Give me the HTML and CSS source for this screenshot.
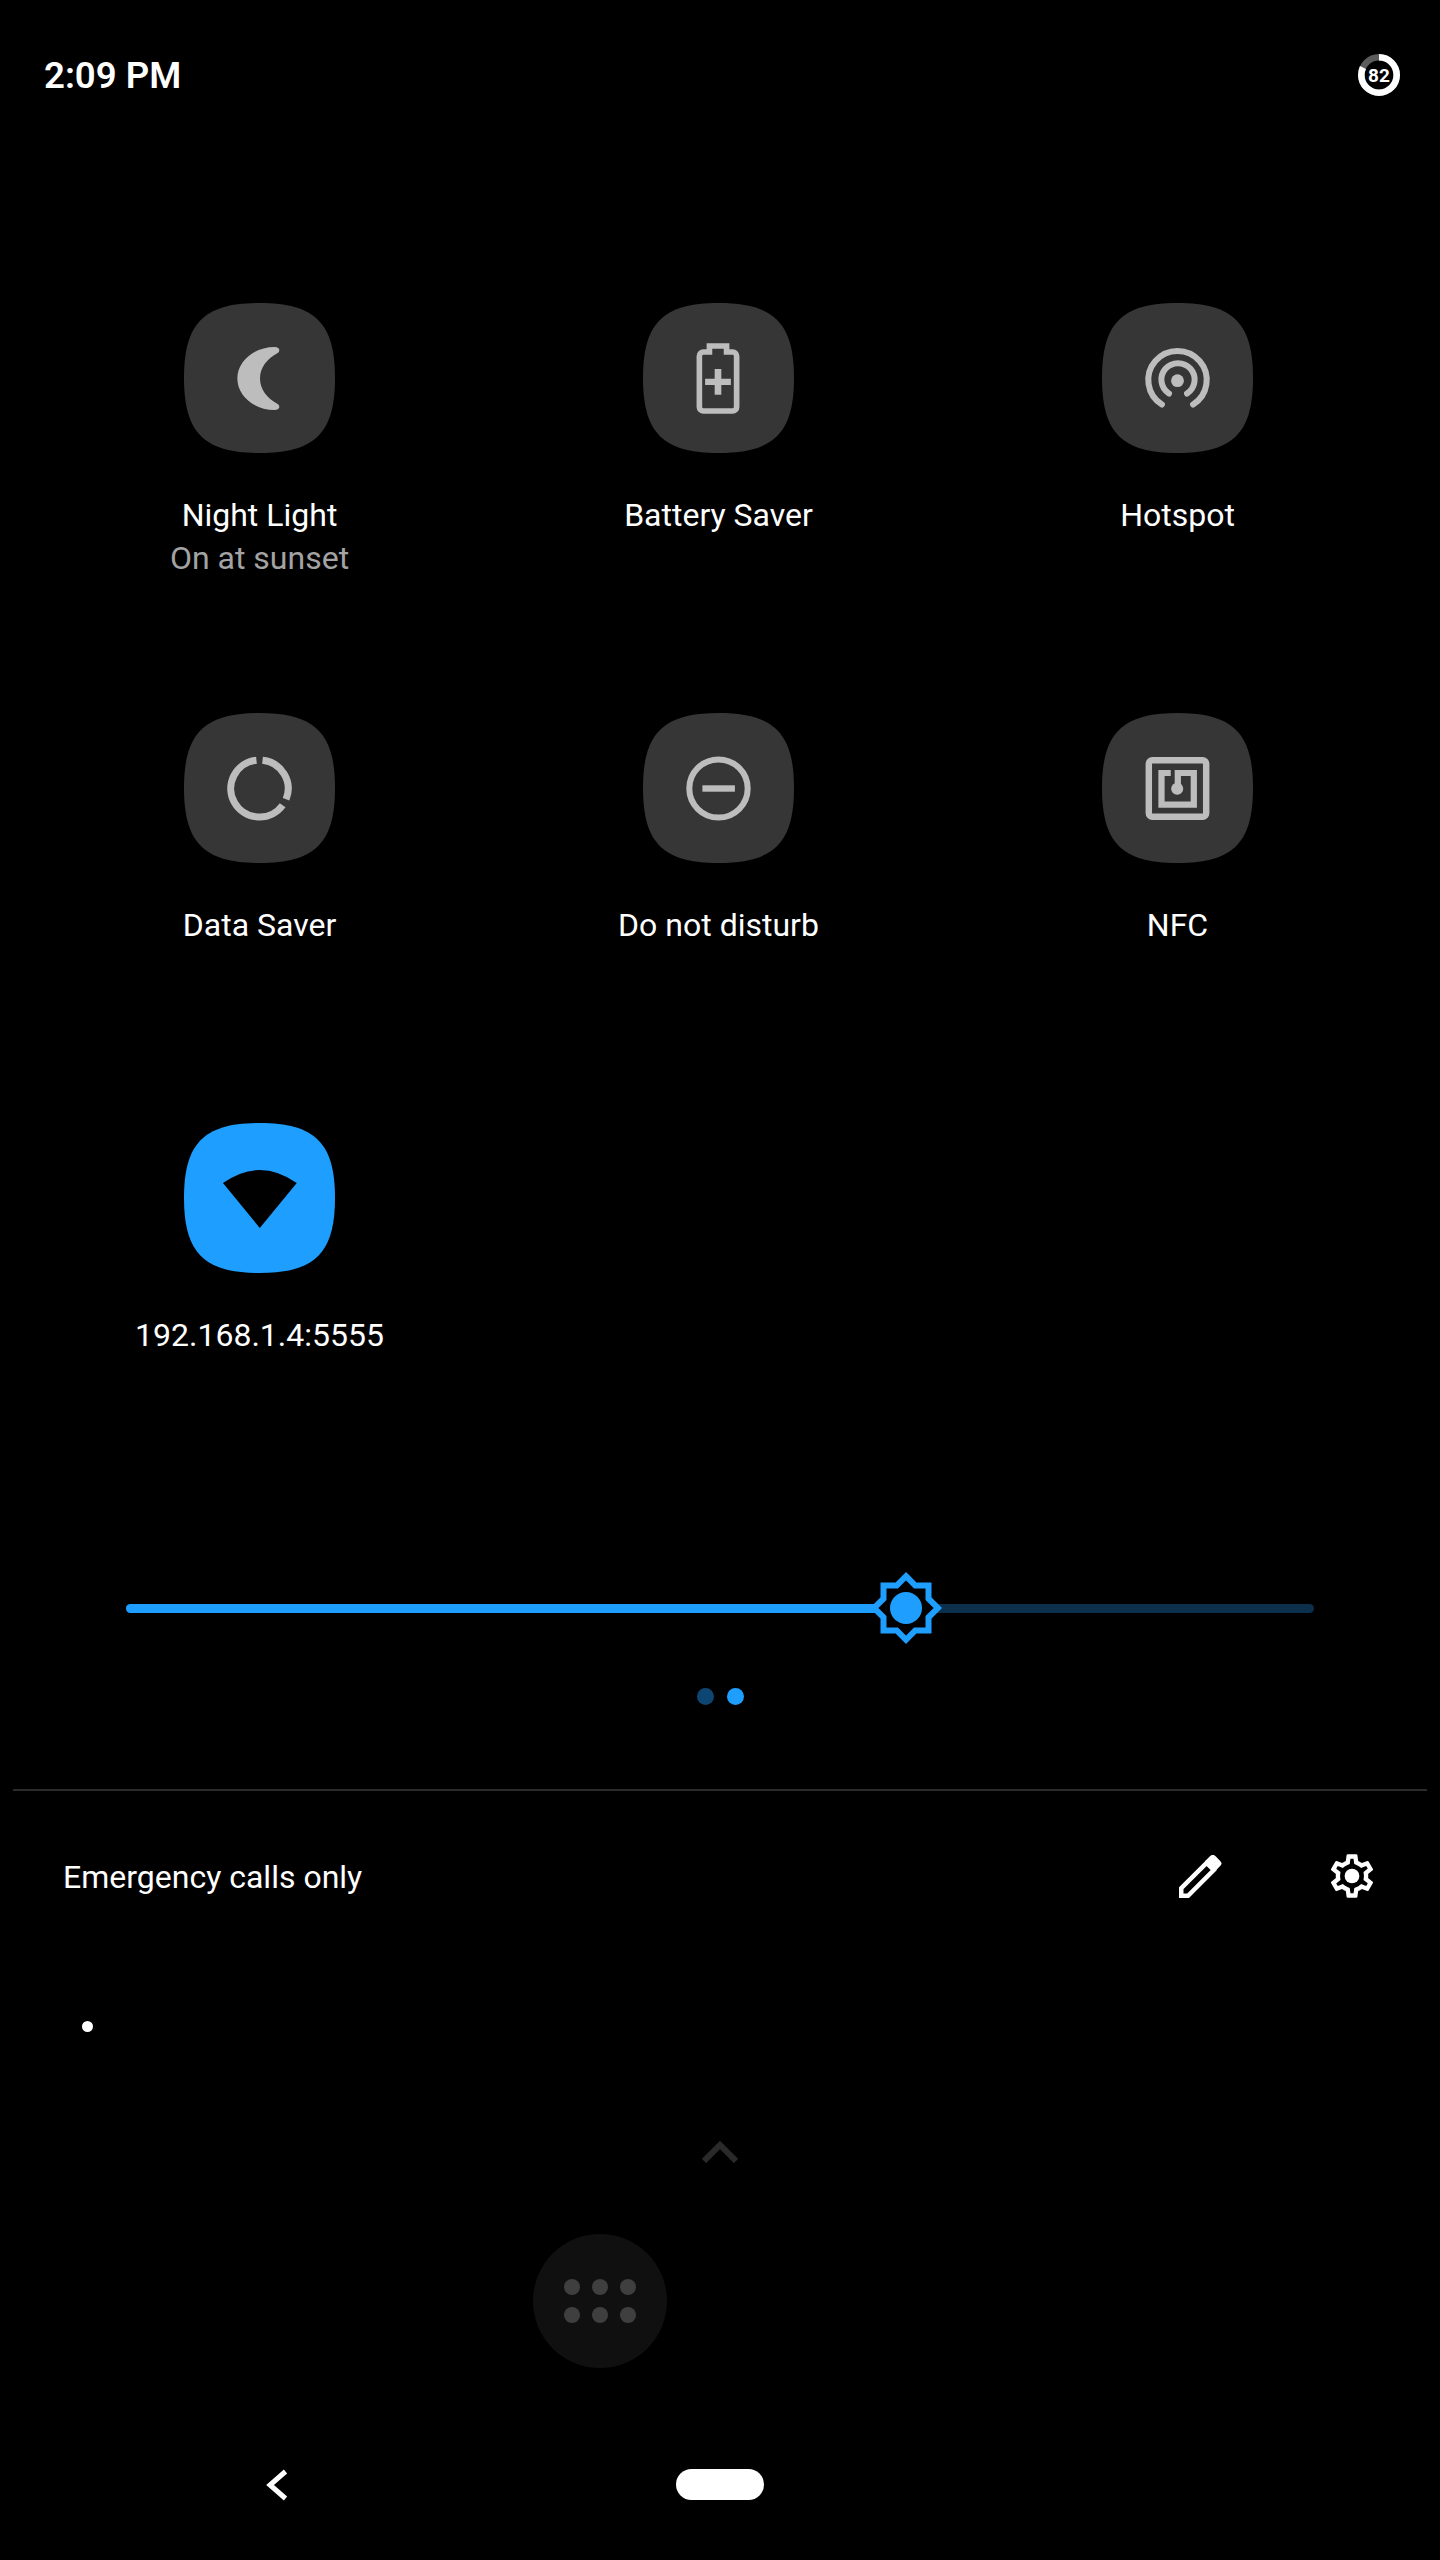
FILE: index.html
```html
<!DOCTYPE html>
<html lang="en">
<head>
<meta charset="utf-8">
<title>Quick settings</title>
<link rel="stylesheet" href="styles.css">
</head>
<body>
<div class="screen">
  <header class="status">
    <span class="time">2:09 PM</span>
    <div class="battery">
      <svg class="battery-ring" viewBox="0 0 42 42" width="42" height="42">
        <circle class="ring-bg" cx="21" cy="21" r="17.7"/>
        <circle class="ring-fg" cx="21" cy="21" r="17.7" pathLength="100" transform="rotate(-90 21 21)"/>
      </svg>
      <span class="battery-level">82</span>
    </div>
  </header>

  <section class="tiles">
    <div class="tile">
      <svg class="tile-icon" viewBox="0 0 150 150" width="151" height="150" preserveAspectRatio="none">
        <path class="shape" d="M75 0C130 0 150 20 150 75S130 150 75 150S0 130 0 75S20 0 75 0Z"/>
        <path class="glyph" d="M90 44C70 44 53 58 53 75.5S70 107 90 107C95 107 96 103 93 101C82 95 75.5 86 75.5 75.5S82 56 93 50C96 48 95 44 90 44Z"/>
      </svg>
      <div class="tile-label">Night Light</div>
      <div class="tile-sub">On at sunset</div>
    </div>
    <div class="tile">
      <svg class="tile-icon" viewBox="0 0 150 150" width="151" height="150" preserveAspectRatio="none">
        <path class="shape" d="M75 0C130 0 150 20 150 75S130 150 75 150S0 130 0 75S20 0 75 0Z"/>
        <path class="line" stroke-width="5.6" d="M66 49V43H83V49H89A4 4 0 0 1 93 53V104A4 4 0 0 1 89 108H60A4 4 0 0 1 56 104V53A4 4 0 0 1 60 49Z"/>
        <path class="glyph" d="M71.2 66H77.8V75.7H87.3V82H77.8V91.7H71.2V82H61.7V75.7H71.2Z"/>
      </svg>
      <div class="tile-label">Battery Saver</div>
    </div>
    <div class="tile">
      <svg class="tile-icon" viewBox="0 0 150 150" width="151" height="150" preserveAspectRatio="none">
        <path class="shape" d="M75 0C130 0 150 20 150 75S130 150 75 150S0 130 0 75S20 0 75 0Z"/>
        <circle class="glyph" cx="75" cy="77.7" r="6.4"/>
        <path class="line round" stroke-width="6" d="M59.5 101.5A29 29 0 1 1 90.5 101.5"/>
        <path class="line round" stroke-width="6" d="M66.5 90.5A16.5 16.5 0 1 1 84.5 90.5"/>
      </svg>
      <div class="tile-label">Hotspot</div>
    </div>
    <div class="tile">
      <svg class="tile-icon" viewBox="0 0 150 150" width="151" height="150" preserveAspectRatio="none">
        <path class="shape" d="M75 0C130 0 150 20 150 75S130 150 75 150S0 130 0 75S20 0 75 0Z"/>
        <path class="line" stroke-width="7" d="M78 47.2A28.5 28.5 0 0 1 101.4 86.2"/>
        <path class="line" stroke-width="7" d="M98 92.3A28.5 28.5 0 1 1 72 47.2"/>
      </svg>
      <div class="tile-label">Data Saver</div>
    </div>
    <div class="tile">
      <svg class="tile-icon" viewBox="0 0 150 150" width="151" height="150" preserveAspectRatio="none">
        <path class="shape" d="M75 0C130 0 150 20 150 75S130 150 75 150S0 130 0 75S20 0 75 0Z"/>
        <circle class="line" stroke-width="6" cx="75" cy="75.5" r="29"/>
        <rect class="glyph" x="59" y="72.3" width="32.3" height="6.4"/>
      </svg>
      <div class="tile-label">Do not disturb</div>
    </div>
    <div class="tile">
      <svg class="tile-icon" viewBox="0 0 150 150" width="151" height="150" preserveAspectRatio="none">
        <path class="shape" d="M75 0C130 0 150 20 150 75S130 150 75 150S0 130 0 75S20 0 75 0Z"/>
        <rect class="line" stroke-width="6.4" x="46.5" y="47.2" width="57" height="56.6" rx="3.5"/>
        <path class="line" stroke-width="6.2" d="M68.3 60H59.1V91.6H91.2V60H75.3V72"/>
        <circle class="glyph" cx="74.7" cy="75.7" r="6"/>
      </svg>
      <div class="tile-label">NFC</div>
    </div>
    <div class="tile">
      <svg class="tile-icon" viewBox="0 0 150 150" width="151" height="150" preserveAspectRatio="none">
        <path class="shape active" d="M75 0C130 0 150 20 150 75S130 150 75 150S0 130 0 75S20 0 75 0Z"/>
        <path class="cutout" d="M38.7 60Q75.3 34 112 60L75.3 105Z"/>
      </svg>
      <div class="tile-label">192.168.1.4:5555</div>
    </div>
  </section>

  <section class="brightness">
    <div class="track">
      <div class="track-fill"></div>
    </div>
    <svg class="thumb" viewBox="-37 -37 74 74" width="74" height="74">
      <polygon class="thumb-star" points="0,-31.8 9.3,-22.5 22.5,-22.5 22.5,-9.3 31.8,0 22.5,9.3 22.5,22.5 9.3,22.5 0,31.8 -9.3,22.5 -22.5,22.5 -22.5,9.3 -31.8,0 -22.5,-9.3 -22.5,-22.5 -9.3,-22.5"/>
      <circle class="thumb-sun" r="16"/>
    </svg>
  </section>

  <div class="pager">
    <span class="pager-dot dim"></span>
    <span class="pager-dot"></span>
  </div>

  <div class="divider"></div>

  <footer class="footer">
    <span class="carrier">Emergency calls only</span>
    <div class="footer-actions">
      <svg class="pencil" viewBox="0 0 44 43" width="44" height="43">
        <path class="pencil-body" d="M2.25 33.25V40.75H9.05L34.75 15L27.6 7.9Z"/>
        <path class="pencil-cap" d="M26 6.3L31.2 1.1A3.7 3.7 0 0 1 36.4 1.1L41.2 5.9A3.7 3.7 0 0 1 41.2 11.1L36 16.3Z"/>
      </svg>
      <svg class="gear" viewBox="0 0 24 24" width="52" height="52">
        <path class="gear-shape" d="M19.43 12.98c.04-.32.07-.64.07-.98 0-.34-.03-.66-.07-.98l2.11-1.65c.19-.15.24-.42.12-.64l-2-3.46c-.09-.16-.26-.25-.44-.25-.06 0-.12.01-.17.03l-2.49 1c-.52-.4-1.08-.73-1.69-.98l-.38-2.65C14.46 2.18 14.25 2 14 2h-4c-.25 0-.46.18-.49.42l-.38 2.65c-.61.25-1.17.59-1.69.98l-2.49-1c-.06-.02-.12-.03-.18-.03-.17 0-.34.09-.43.25l-2 3.46c-.13.22-.07.49.12.64l2.11 1.65c-.04.32-.07.65-.07.98 0 .33.03.66.07.98l-2.11 1.65c-.19.15-.24.42-.12.64l2 3.46c.09.16.26.25.44.25.06 0 .12-.01.17-.03l2.49-1c.52.4 1.08.73 1.69.98l.38 2.65c.03.24.24.42.49.42h4c.25 0 .46-.18.49-.42l.38-2.65c.61-.25 1.17-.59 1.69-.98l2.49 1c.06.02.12.03.18.03.17 0 .34-.09.43-.25l2-3.46c.12-.22.07-.49-.12-.64l-2.11-1.65zm-1.98-1.71c.04.31.05.52.05.73 0 .21-.02.43-.05.73l-.14 1.13.89.7 1.08.84-.7 1.21-1.27-.51-1.04-.42-.9.68c-.43.32-.84.56-1.25.73l-1.06.43-.16 1.13-.2 1.35h-1.4l-.19-1.35-.16-1.13-1.06-.43c-.43-.18-.83-.41-1.23-.71l-.91-.7-1.06.43-1.27.51-.7-1.21 1.08-.84.89-.7-.14-1.13c-.03-.31-.05-.54-.05-.74s.02-.43.05-.73l.14-1.13-.89-.7-1.08-.84.7-1.21 1.27.51 1.04.42.9-.68c.43-.32.84-.56 1.25-.73l1.06-.43.16-1.13.2-1.35h1.39l.19 1.35.16 1.13 1.06.43c.43.18.83.41 1.23.71l.91.7 1.06-.43 1.27-.51.7 1.21-1.07.85-.89.7.14 1.13z"/>
        <circle class="gear-shape" cx="12" cy="12" r="3.4"/>
      </svg>
    </div>
  </footer>

  <div class="notif-dot"></div>

  <svg class="chevron" viewBox="0 0 36 22" width="36" height="22">
    <path class="chevron-line" d="M2 20L18 4L34 20"/>
  </svg>

  <div class="drawer">
    <span class="drawer-dot"></span><span class="drawer-dot"></span><span class="drawer-dot"></span>
    <span class="drawer-dot"></span><span class="drawer-dot"></span><span class="drawer-dot"></span>
  </div>

  <nav class="nav">
    <svg class="back" viewBox="0 0 24 32" width="24" height="32">
      <path class="back-line" d="M21.5 2.5L6 16L21.5 29.5"/>
    </svg>
    <div class="home"></div>
  </nav>
</div>
</body>
</html>
```

FILE: styles.css
```css
* { box-sizing: border-box; }

html, body {
  margin: 0;
  background: #000;
}

.screen {
  width: 1440px;
  height: 2560px;
  overflow: hidden;
  background: #000;
  color: #fff;
  font-family: Roboto, "Noto Sans", sans-serif;
}

.status {
  height: 150px;
  padding: 0 40px 0 44px;
  display: flex;
  align-items: center;
  justify-content: space-between;
}

.time {
  margin-top: 3px;
  font-size: 36.6px;
  font-weight: 600;
  line-height: 1;
}

.battery {
  position: relative;
  width: 42px;
  height: 42px;
}

.battery-ring { display: block; }

.ring-bg, .ring-fg {
  fill: none;
  stroke-width: 6.6;
}

.ring-bg { stroke: #5c5c5c; }

.ring-fg {
  stroke: #fff;
  stroke-dasharray: 82 18;
}

.battery-level {
  position: absolute;
  inset: 0;
  display: flex;
  align-items: center;
  justify-content: center;
  font-size: 19px;
  font-weight: 700;
  line-height: 1;
}

.tiles {
  margin: 153px 0 0 30px;
  display: grid;
  grid-template-columns: repeat(3, 459px);
  grid-auto-rows: 410px;
}

.tile {
  display: flex;
  flex-direction: column;
  align-items: center;
}

.tile-icon { display: block; margin-bottom: 41px; }

.shape { fill: #363636; }
.shape.active { fill: #1e9fff; }
.glyph { fill: #bdbdbd; }
.cutout { fill: #000; }

.line {
  fill: none;
  stroke: #bdbdbd;
}

.line.round { stroke-linecap: round; }

.tile-label {
  font-size: 32px;
  line-height: 43px;
  color: #fff;
}

.tile-sub {
  font-size: 32px;
  line-height: 43px;
  color: #a3a3a3;
}

.brightness {
  position: relative;
  margin: 39px 126px 0;
  height: 72px;
  display: flex;
  align-items: center;
}

.track {
  width: 100%;
  height: 9px;
  border-radius: 5px;
  background: #0c2f4b;
  overflow: hidden;
}

.track-fill {
  width: 760px;
  height: 100%;
  background: #1e9fff;
}

.thumb {
  position: absolute;
  left: 743px;
  top: -1px;
}

.thumb-star {
  fill: #000;
  stroke: #1e9fff;
  stroke-width: 6;
}

.thumb-sun { fill: #1e9fff; }

.pager {
  margin-top: 44px;
  display: flex;
  justify-content: center;
  gap: 13px;
}

.pager-dot {
  width: 17px;
  height: 17px;
  border-radius: 50%;
  background: #1e9fff;
}

.pager-dot.dim { background: #0d4672; }

.divider {
  margin: 84px 13px 0;
  height: 2px;
  background: #2b2b2b;
}

.footer {
  height: 170px;
  padding: 0 62px 0 63px;
  display: flex;
  align-items: center;
  justify-content: space-between;
}

.carrier {
  margin-top: 2px;
  font-size: 32px;
  line-height: 43px;
}

.footer-actions {
  display: flex;
  align-items: center;
  gap: 103px;
}

.pencil { display: block; }

.pencil-body {
  fill: none;
  stroke: #fff;
  stroke-width: 4.5;
}

.pencil-cap { fill: #fff; }

.gear { display: block; }
.gear-shape { fill: #fff; }

.notif-dot {
  width: 11px;
  height: 11px;
  margin: 60px 0 0 82px;
  border-radius: 50%;
  background: #fff;
}

.chevron {
  display: block;
  margin: 109px auto 0;
}

.chevron-line {
  fill: none;
  stroke: #2a2a2a;
  stroke-width: 6;
}

.drawer {
  width: 134px;
  height: 134px;
  margin: 71px 0 0 533px;
  padding: 45px 31px;
  border-radius: 50%;
  background: #101010;
  display: grid;
  grid-template-columns: repeat(3, 16px);
  grid-auto-rows: 16px;
  gap: 12px;
}

.drawer-dot {
  border-radius: 50%;
  background: #3f3f3f;
}

.nav {
  margin-top: 101px;
  height: 32px;
  padding-left: 264px;
  display: flex;
  align-items: flex-start;
}

.back { display: block; }

.back-line {
  fill: none;
  stroke: #fff;
  stroke-width: 5;
}

.home {
  width: 88px;
  height: 31px;
  margin-left: 388px;
  border-radius: 16px;
  background: #fff;
}
```
